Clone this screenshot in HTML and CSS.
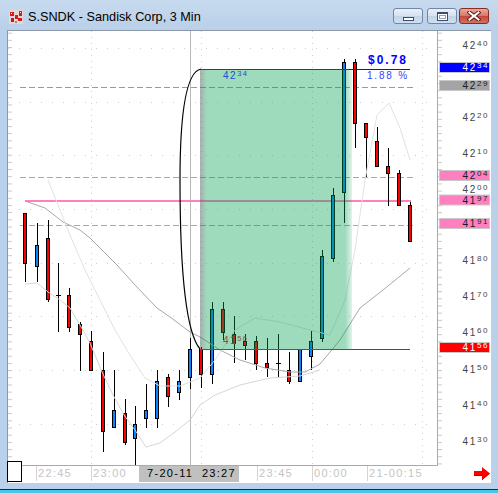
FILE: index.html
```html
<!DOCTYPE html>
<html>
<head>
<meta charset="utf-8">
<title>S.SNDK - Sandisk Corp, 3 Min</title>
<link rel="stylesheet" href="styles.css">
</head>
<body>
<div class="window">
  <div class="titlebar">
    <svg class="appicon" width="14" height="14" viewBox="0 0 14 14">
      <rect x="0" y="0" width="14" height="14" fill="#e6d6d6"/>
      <rect x="1" y="2" width="4" height="4" fill="#d41a1a"/>
      <rect x="6" y="5" width="3" height="4" fill="#d41a1a"/>
      <rect x="10" y="1" width="3" height="5" fill="#d41a1a"/>
      <rect x="2" y="8" width="3" height="4" fill="#c01818"/>
      <rect x="9" y="8" width="4" height="3" fill="#d41a1a"/>
      <rect x="6" y="11" width="2" height="2" fill="#9a8a8a"/>
      <rect x="2" y="3" width="1" height="1" fill="#fff"/>
      <rect x="11" y="2" width="1" height="1" fill="#fff"/>
    </svg>
    <span class="title">S.SNDK - Sandisk Corp, 3 Min</span>
    <div class="controls">
      <div class="btn"><span class="glyph-min"></span></div>
      <div class="btn btn-max"><span class="glyph-max"></span></div>
      <div class="btn btn-close">
        <svg width="14" height="10" viewBox="0 0 14 10">
          <path d="M2.5,1.5 L11.5,8.5 M11.5,1.5 L2.5,8.5" stroke="#5a1a12" stroke-width="4" stroke-linecap="square"/>
          <path d="M2.5,1.5 L11.5,8.5 M11.5,1.5 L2.5,8.5" stroke="#ffffff" stroke-width="2" stroke-linecap="square"/>
        </svg>
      </div>
    </div>
  </div>

  <div class="client">
    <div class="chartrow">
      <div class="plot">
        <svg class="plotsvg" width="429" height="434" viewBox="8 31 429 434">
          <defs>
            <pattern id="tkl" x="8" y="47" width="10" height="7.18" patternUnits="userSpaceOnUse">
              <rect x="0" y="0" width="4" height="1" fill="#c8c8c8"/>
            </pattern>
            <linearGradient id="gb" x1="0" y1="0" x2="1" y2="0">
              <stop offset="0" stop-color="#5a5a5a" stop-opacity="0.5"/>
              <stop offset="0.045" stop-color="#00a050" stop-opacity="0.38"/>
              <stop offset="0.955" stop-color="#00a050" stop-opacity="0.38"/>
              <stop offset="1" stop-color="#00a050" stop-opacity="0.12"/>
            </linearGradient>
          </defs>

          <g class="grid">
            <line x1="8" y1="48.5" x2="437" y2="48.5"/>
            <line x1="8" y1="102.5" x2="437" y2="102.5"/>
            <line x1="8" y1="155.5" x2="437" y2="155.5"/>
            <line x1="8" y1="209.5" x2="437" y2="209.5"/>
            <line x1="8" y1="263.5" x2="437" y2="263.5"/>
            <line x1="8" y1="316.5" x2="437" y2="316.5"/>
            <line x1="8" y1="370.5" x2="437" y2="370.5"/>
            <line x1="8" y1="424.5" x2="437" y2="424.5"/>
          </g>
          <g class="vgrid">
            <line x1="91.5" y1="31" x2="91.5" y2="465"/>
            <line x1="201.5" y1="31" x2="201.5" y2="465"/>
            <line x1="312.5" y1="31" x2="312.5" y2="465"/>
            <line x1="422.5" y1="31" x2="422.5" y2="465"/>
          </g>
          <rect x="8" y="31" width="4" height="434" fill="url(#tkl)"/>
          <line class="cursor" x1="190.5" y1="31" x2="190.5" y2="465"/>

          <line class="dash-gray" x1="20" y1="87.5" x2="416" y2="87.5"/>
          <line class="dash-pink" x1="20" y1="177.5" x2="416" y2="177.5"/>
          <line class="solid-pink" x1="25" y1="201" x2="411" y2="201"/>
          <line class="dash-pink" x1="20" y1="225.5" x2="416" y2="225.5"/>

          <g class="candles">
            <line x1="25.5" y1="213" x2="25.5" y2="282"/><rect class="r" x="23.5" y="213.5" width="3" height="50"/>
            <line x1="37.5" y1="223" x2="37.5" y2="282"/><rect class="b" x="35.5" y="245.5" width="3" height="21"/>
            <line x1="48.5" y1="220" x2="48.5" y2="302"/><rect class="r" x="46.5" y="238.5" width="3" height="61"/>
            <line x1="58.5" y1="263" x2="58.5" y2="332"/><line x1="56" y1="295.5" x2="61" y2="295.5"/>
            <line x1="69.5" y1="288" x2="69.5" y2="332"/><rect class="r" x="67.5" y="295.5" width="3" height="32"/>
            <line x1="80.5" y1="322" x2="80.5" y2="371"/><rect class="r" x="78.5" y="324.5" width="3" height="10"/>
            <line x1="91.5" y1="331" x2="91.5" y2="370"/><rect class="r" x="89.5" y="341.5" width="3" height="29"/>
            <line x1="103.5" y1="352" x2="103.5" y2="452"/><rect class="r" x="101.5" y="370.5" width="3" height="61"/>
            <line x1="114.5" y1="370" x2="114.5" y2="427"/><rect class="b" x="112.5" y="410.5" width="3" height="17"/>
            <line x1="125.5" y1="399" x2="125.5" y2="445"/><rect class="r" x="123.5" y="413.5" width="3" height="29"/>
            <line x1="135.5" y1="406" x2="135.5" y2="465"/><rect class="b" x="133.5" y="424.5" width="3" height="14"/>
            <line x1="146.5" y1="384" x2="146.5" y2="428"/><rect class="b" x="144.5" y="410.5" width="3" height="8"/>
            <line x1="157.5" y1="370" x2="157.5" y2="428"/><rect class="b" x="155.5" y="381.5" width="3" height="37"/>
            <line x1="168.5" y1="374" x2="168.5" y2="407"/><rect class="r" x="166.5" y="377.5" width="3" height="19"/>
            <line x1="179.5" y1="370" x2="179.5" y2="400"/><rect class="b" x="177.5" y="381.5" width="3" height="11"/>
            <line x1="190.5" y1="338" x2="190.5" y2="389"/><rect class="b" x="188.5" y="349.5" width="3" height="28"/>
            <line x1="201.5" y1="347" x2="201.5" y2="388"/><rect class="r" x="199.5" y="349.5" width="3" height="25"/>
            <line x1="212.5" y1="302" x2="212.5" y2="384"/><rect class="b" x="210.5" y="309.5" width="3" height="65"/>
            <line x1="223.5" y1="302" x2="223.5" y2="340"/><rect class="r" x="221.5" y="309.5" width="3" height="23"/>
            <line x1="234.5" y1="316" x2="234.5" y2="363"/><rect class="r" x="232.5" y="334.5" width="3" height="9"/>
            <line x1="245.5" y1="334" x2="245.5" y2="360"/><rect class="r" x="243.5" y="341.5" width="3" height="4"/>
            <line x1="256.5" y1="336" x2="256.5" y2="370"/><rect class="r" x="254.5" y="341.5" width="3" height="22"/>
            <line x1="267.5" y1="338" x2="267.5" y2="377"/><rect class="r" x="265.5" y="363.5" width="3" height="4"/>
            <line x1="278.5" y1="334" x2="278.5" y2="377"/><line x1="276" y1="363.5" x2="281" y2="363.5"/>
            <line x1="289.5" y1="352" x2="289.5" y2="384"/><rect class="r" x="287.5" y="370.5" width="3" height="11"/>
            <line x1="300.5" y1="349" x2="300.5" y2="381"/><rect class="b" x="298.5" y="349.5" width="3" height="32"/>
            <line x1="311.5" y1="331" x2="311.5" y2="370"/><rect class="b" x="309.5" y="341.5" width="3" height="15"/>
            <line x1="322.5" y1="250" x2="322.5" y2="342"/><rect class="b" x="320.5" y="256.5" width="3" height="82"/>
            <line x1="333.5" y1="188" x2="333.5" y2="262"/><rect class="b" x="331.5" y="195.5" width="3" height="63"/>
            <line x1="344.5" y1="59" x2="344.5" y2="223"/><rect class="b" x="342.5" y="62.5" width="3" height="130"/>
            <line x1="355.5" y1="59" x2="355.5" y2="148"/><rect class="r" x="353.5" y="62.5" width="3" height="61"/>
            <line x1="366.5" y1="123" x2="366.5" y2="177"/><rect class="r" x="364.5" y="123.5" width="3" height="14"/>
            <line x1="377.5" y1="127" x2="377.5" y2="166"/><rect class="r" x="375.5" y="141.5" width="3" height="25"/>
            <line x1="388.5" y1="148" x2="388.5" y2="206"/><rect class="r" x="386.5" y="166.5" width="3" height="7"/>
            <line x1="399.5" y1="170" x2="399.5" y2="205"/><rect class="r" x="397.5" y="173.5" width="3" height="32"/>
            <line x1="410.5" y1="202" x2="410.5" y2="241"/><rect class="r" x="408.5" y="205.5" width="3" height="36"/>
          </g>

          <polyline class="ma" points="25,201 45,208 63,222 80,230 90,238 117,265 135,285 157,308 170,317 190,332 200,337 220,350 240,360 265,368 290,372 305,372 320,364 340,340 360,308 383,290 410,268"/>
          <polyline class="band-low" points="25,284 37,283 48,292 60,300 70,308 80,325 90,343 102,372 113,395 124,415 135,430 146,447 160,443 175,432 190,420 200,405 215,395 240,385 270,378 300,376 320,370"/>
          <polyline class="band-up" points="48,180 58,205 70,235 85,270 100,300 115,330 130,355 145,378 160,386 180,386 200,378 215,360 235,330 255,318 280,322 310,330 330,335 345,300 355,250 365,180 377,115 389,103 400,128 410,160"/>

          <line class="hi-line" x1="201" y1="69.5" x2="410" y2="69.5"/>
          <line class="lo-line" x1="200" y1="349.5" x2="410" y2="349.5"/>
          <text class="note-red" x="223" y="343.5">41<tspan class="sup" dy="-2.5">56</tspan></text>

          <rect x="200" y="69" width="152" height="281" fill="url(#gb)"/>
          <path class="bracket" d="M201,69 C185,72 180,120 180,180 C180,260 184,330 200,349"/>

          <text class="note-blue" x="223" y="78.5">42<tspan class="sup" dy="-2.5">34</tspan></text>
          <text class="chg" x="368" y="64">$0.78</text>
          <text class="pct" x="367" y="78.5">1.88 %</text>
        </svg>
      </div>
      <div class="axis">
        <svg class="axissvg" width="53" height="435" viewBox="438 31 53 435">
          <defs>
            <pattern id="tkr" x="438" y="47" width="10" height="7.18" patternUnits="userSpaceOnUse">
              <rect x="0" y="0" width="4" height="1" fill="#c8c8c8"/>
            </pattern>
          </defs>
          <rect x="438" y="31" width="4" height="434" fill="url(#tkr)"/>

          <text class="ax" x="489" y="49">42<tspan class="sup" dy="-2.6">40</tspan></text>
          <text class="ax" x="489" y="121">42<tspan class="sup" dy="-2.6">20</tspan></text>
          <text class="ax" x="489" y="157">42<tspan class="sup" dy="-2.6">10</tspan></text>
          <text class="ax" x="489" y="192.5">42<tspan class="sup" dy="-2.6">00</tspan></text>
          <text class="ax" x="489" y="263.5">41<tspan class="sup" dy="-2.6">80</tspan></text>
          <text class="ax" x="489" y="300">41<tspan class="sup" dy="-2.6">70</tspan></text>
          <text class="ax" x="489" y="336">41<tspan class="sup" dy="-2.6">60</tspan></text>
          <text class="ax" x="489" y="372.5">41<tspan class="sup" dy="-2.6">50</tspan></text>
          <text class="ax" x="489" y="408.5">41<tspan class="sup" dy="-2.6">40</tspan></text>
          <text class="ax" x="489" y="444.5">41<tspan class="sup" dy="-2.6">30</tspan></text>

          <rect class="box-blue" x="439.5" y="62.5" width="50" height="10"/>
          <text class="ax ax-white" x="489" y="71">42<tspan class="sup" dy="-2.6">34</tspan></text>

          <rect class="box-gray" x="439.5" y="80.5" width="50" height="10"/>
          <text class="ax ax-dark" x="489" y="89">42<tspan class="sup" dy="-2.6">29</tspan></text>

          <rect class="box-pink" x="439.5" y="170.5" width="50" height="10"/>
          <text class="ax ax-dark" x="489" y="179">42<tspan class="sup" dy="-2.6">04</tspan></text>

          <rect class="box-pink" x="439.5" y="195" width="50" height="10"/>
          <text class="ax ax-dark" x="489" y="203.5">41<tspan class="sup" dy="-2.6">97</tspan></text>

          <rect class="box-pink" x="439.5" y="218.5" width="50" height="10"/>
          <text class="ax ax-dark" x="489" y="227">41<tspan class="sup" dy="-2.6">91</tspan></text>

          <rect class="box-red" x="439.5" y="342.5" width="50" height="10"/>
          <text class="ax ax-white" x="489" y="351">41<tspan class="sup" dy="-2.6">56</tspan></text>
        </svg>
      </div>
    </div>

    <div class="timeaxis">
      <div class="t-spacer"></div>
      <div class="t-cell">22:45</div>
      <div class="t-cell">23:00</div>
      <div class="t-cell"></div>
      <div class="t-cell t-wide"></div>
      <div class="t-cell">23:45</div>
      <div class="t-cell">00:00</div>
      <div class="t-cell t-last">21-00:15</div>
      <svg class="arrow" width="16" height="13" viewBox="0 0 16 13">
        <polygon points="0,4 8,4 8,0 16,6.5 8,13 8,9 0,9" fill="#ff0000"/>
        <polygon points="0,8 8,8 8,9 0,9" fill="#b00000"/>
        <polygon points="8,13 16,6.5 15,6.5 8,12" fill="#b00000"/>
      </svg>
      <div class="cursorlabel">7-20-11  23:27</div>
    </div>

    <div class="cornerbox"></div>
  </div>

  <div class="bottomframe"></div>
  <div class="edgeline"></div>
  <div class="taskstrip"></div>
</div>
</body>
</html>
```

FILE: styles.css
```css
html, body {
  margin: 0;
  padding: 0;
}

body {
  width: 498px;
  height: 493px;
  overflow: hidden;
  background: #b9d1ea;
  font-family: "Liberation Sans", Arial, sans-serif;
}

.window {
  display: flex;
  flex-direction: column;
  width: 498px;
  height: 493px;
}

.titlebar {
  height: 30px;
  box-sizing: border-box;
  display: flex;
  align-items: flex-start;
  padding: 0 9px 0 9px;
  background: linear-gradient(#c7daef, #b9d0e9);
}

.appicon {
  margin-top: 10px;
  flex: none;
}

.title {
  margin-left: 5px;
  margin-top: 9px;
  font-size: 12.7px;
  line-height: 16px;
  color: #000;
  white-space: nowrap;
}

.controls {
  margin-left: auto;
  margin-top: 8px;
  display: flex;
}

.btn {
  width: 30px;
  height: 16px;
  box-sizing: border-box;
  border: 1px solid #6f86a5;
  border-radius: 3px;
  background: linear-gradient(#e9f0f9 0%, #d6e2f0 48%, #c3d4e9 52%, #cfdef0 100%);
  display: flex;
  align-items: center;
  justify-content: center;
}

.btn-max {
  margin-left: 4px;
}

.btn-close {
  margin-left: 2px;
  border-color: #8a2c22;
  background: linear-gradient(#eaa89f 0%, #d8786c 48%, #c5483a 52%, #d4705e 100%);
}

.glyph-min {
  width: 11px;
  height: 4px;
  box-sizing: border-box;
  border: 1px solid #3b4d6b;
  background: #fff;
  margin-top: 6px;
}

.glyph-max {
  width: 11px;
  height: 9px;
  box-sizing: border-box;
  border: 1px solid #3b4d6b;
  border-top-width: 2px;
  background: #fff;
  box-shadow: inset 0 0 0 1px #fff, inset 0 0 0 2px #8fa3c0;
}

.client {
  position: relative;
  margin-left: 7px;
  width: 484px;
  height: 453px;
  box-sizing: border-box;
  border-left: 1px solid #8d99a8;
  border-top: 1px solid #8d99a8;
  background: #fff;
}

.chartrow {
  display: flex;
  height: 435px;
}

.plot {
  width: 429px;
  height: 434px;
  border-right: 1px solid #a9a9a9;
  border-bottom: 1px solid #a9a9a9;
  flex: none;
}

.plotsvg, .axissvg {
  display: block;
}

.axis {
  width: 53px;
  height: 435px;
  flex: none;
}

.grid line {
  stroke: #cfcfcf;
  stroke-width: 1;
  stroke-dasharray: 1 10;
}

.vgrid line {
  stroke: #cfcfcf;
  stroke-width: 1;
  stroke-dasharray: 1 5;
}

.cursor {
  stroke: #b8b8b8;
  stroke-width: 1;
}

.dash-gray {
  stroke: #9a9a9a;
  stroke-width: 1;
  stroke-dasharray: 6 3;
}

.dash-pink {
  stroke: #ee82b4;
  stroke-width: 1;
  stroke-dasharray: 6 3;
}

.solid-pink {
  stroke: #ff80c0;
  stroke-width: 2;
}

.candles line {
  stroke: #000;
  stroke-width: 1;
}

.candles rect {
  stroke: #000;
  stroke-width: 1;
}

.candles .r {
  fill: #ff0000;
}

.candles .b {
  fill: #0a84ff;
}

.ma {
  fill: none;
  stroke: #a8a8a8;
  stroke-width: 1;
}

.band-low {
  fill: none;
  stroke: #d6d6d6;
  stroke-width: 1;
}

.band-up {
  fill: none;
  stroke: #e2e2e2;
  stroke-width: 1;
}

.hi-line {
  stroke: #1414c0;
  stroke-width: 1;
}

.lo-line {
  stroke: #ff0000;
  stroke-width: 1;
}

.bracket {
  fill: none;
  stroke: #000;
  stroke-width: 1.2;
}

.note-blue {
  font-family: "Liberation Sans", Arial, sans-serif;
  font-size: 10px;
  letter-spacing: 1.5px;
  fill: #2050c8;
}

.note-red {
  font-family: "Liberation Sans", Arial, sans-serif;
  font-size: 10px;
  letter-spacing: 1.5px;
  fill: #c03020;
}

.chg {
  font-family: "Liberation Sans", Arial, sans-serif;
  font-size: 12px;
  font-weight: bold;
  letter-spacing: 2px;
  fill: #0000ff;
}

.pct {
  font-family: "Liberation Sans", Arial, sans-serif;
  font-size: 10px;
  letter-spacing: 1.8px;
  fill: #3344ff;
}

.sup {
  font-size: 7.5px;
}

.ax {
  font-family: "Liberation Sans", Arial, sans-serif;
  font-size: 10px;
  letter-spacing: 1.6px;
  fill: #444;
  text-anchor: end;
}

.ax .sup {
  font-size: 8px;
}

.ax-white {
  fill: #fff;
}

.ax-dark {
  fill: #1a1a1a;
}

.box-blue {
  fill: #0000ff;
  stroke: #c8c8c8;
  stroke-width: 1;
}

.box-gray {
  fill: #a4a4a4;
  stroke: #c8c8c8;
  stroke-width: 1;
}

.box-pink {
  fill: #ff80c0;
  stroke: #c8c8c8;
  stroke-width: 1;
}

.box-red {
  fill: #ff0000;
  stroke: #c8c8c8;
  stroke-width: 1;
}

.timeaxis {
  position: relative;
  display: flex;
  height: 17px;
  font-size: 11px;
  line-height: 15px;
  letter-spacing: 1.3px;
  color: #c4c4c4;
}

.t-spacer {
  width: 28px;
  flex: none;
}

.t-cell {
  width: 55px;
  flex: none;
  box-sizing: border-box;
  border-left: 1px solid #d4d4d4;
  padding-left: 1px;
  white-space: nowrap;
  height: 15px;
}

.t-wide {
  width: 56px;
}

.t-last {
  width: 70px;
}

.arrow {
  margin-left: auto;
  margin-right: 1px;
  margin-top: 1px;
  flex: none;
}

.cursorlabel {
  position: absolute;
  left: 131px;
  top: 0;
  width: 100px;
  height: 16px;
  box-sizing: border-box;
  padding-left: 8px;
  background: #c0c0c0;
  color: #000;
  white-space: pre;
}

.cornerbox {
  position: absolute;
  left: -1px;
  top: 430px;
  width: 15px;
  height: 21px;
  box-sizing: border-box;
  border: 1px solid #000;
  background: #fff;
}

.bottomframe {
  height: 6px;
  background: #b9d1ea;
}

.edgeline {
  height: 1px;
  background: #1d2a36;
}

.taskstrip {
  height: 3px;
  background: #46c6ee;
}
```
